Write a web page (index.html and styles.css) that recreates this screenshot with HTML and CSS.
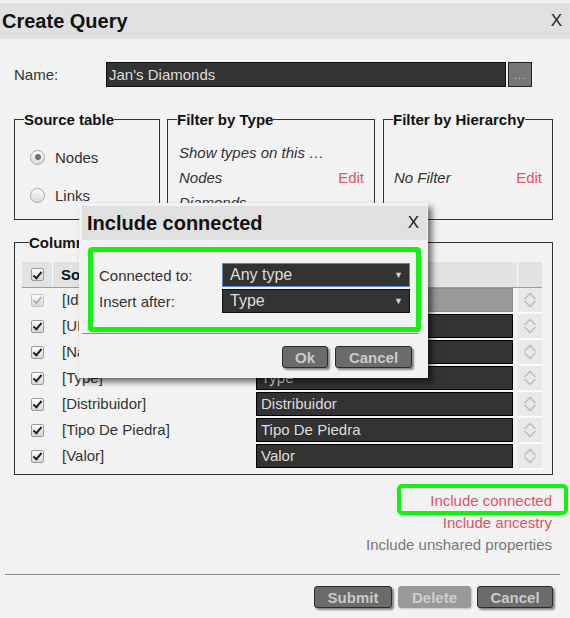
FILE: index.html
```html
<!DOCTYPE html>
<html lang="en">
<head>
<meta charset="utf-8">
<title>Create Query</title>
<link rel="stylesheet" href="styles.css">
</head>
<body>
<div class="page">
  <div class="titlebar">
    <h1 class="title">Create Query</h1>
    <span class="close">X</span>
  </div>

  <div class="name-row">
    <span class="name-label">Name:</span>
    <div class="name-input">Jan's Diamonds</div>
    <div class="name-btn">...</div>
  </div>

  <div class="filters">
    <fieldset class="box src">
      <legend>Source table</legend>
      <div class="src-body">
        <div class="radio-row"><span class="radio on"></span><span class="radio-label">Nodes</span></div>
        <div class="radio-row second"><span class="radio"></span><span class="radio-label">Links</span></div>
      </div>
    </fieldset>
    <fieldset class="box ftype">
      <legend>Filter by Type</legend>
      <div class="ftype-body">
        <div class="frow"><em>Show types on this …</em></div>
        <div class="frow"><em>Nodes</em><a class="edit">Edit</a></div>
        <div class="frow"><em>Diamonds</em></div>
      </div>
    </fieldset>
    <fieldset class="box fhier">
      <legend>Filter by Hierarchy</legend>
      <div class="fhier-body">
        <div class="frow"><em>No Filter</em><a class="edit">Edit</a></div>
      </div>
    </fieldset>
  </div>

  <fieldset class="box columns">
    <legend>Columns</legend>
    <div class="col-table">
      <div class="col-head">
        <div class="hcell hcb"><span class="cb"></span></div>
        <div class="hcell hmain"><span class="hsrc">Source</span></div>
        <div class="hcell hspin"></div>
      </div>
      <div class="col-row">
        <div class="ccb"><span class="cb dis"></span></div>
        <div class="cname">[Id]</div>
        <div class="cinput dis"></div>
        <div class="cspin"><svg width="14" height="18" viewBox="0 0 14 18"><polyline points="1.5,8 7,2.5 12.5,8"/><polyline points="1.5,10 7,15.5 12.5,10"/></svg></div>
      </div>
      <div class="col-row">
        <div class="ccb"><span class="cb"></span></div>
        <div class="cname">[UID]</div>
        <div class="cinput">UID</div>
        <div class="cspin"><svg width="14" height="18" viewBox="0 0 14 18"><polyline points="1.5,8 7,2.5 12.5,8"/><polyline points="1.5,10 7,15.5 12.5,10"/></svg></div>
      </div>
      <div class="col-row">
        <div class="ccb"><span class="cb"></span></div>
        <div class="cname">[Name]</div>
        <div class="cinput">Name</div>
        <div class="cspin"><svg width="14" height="18" viewBox="0 0 14 18"><polyline points="1.5,8 7,2.5 12.5,8"/><polyline points="1.5,10 7,15.5 12.5,10"/></svg></div>
      </div>
      <div class="col-row">
        <div class="ccb"><span class="cb"></span></div>
        <div class="cname">[Type]</div>
        <div class="cinput">Type</div>
        <div class="cspin"><svg width="14" height="18" viewBox="0 0 14 18"><polyline points="1.5,8 7,2.5 12.5,8"/><polyline points="1.5,10 7,15.5 12.5,10"/></svg></div>
      </div>
      <div class="col-row">
        <div class="ccb"><span class="cb"></span></div>
        <div class="cname">[Distribuidor]</div>
        <div class="cinput">Distribuidor</div>
        <div class="cspin"><svg width="14" height="18" viewBox="0 0 14 18"><polyline points="1.5,8 7,2.5 12.5,8"/><polyline points="1.5,10 7,15.5 12.5,10"/></svg></div>
      </div>
      <div class="col-row">
        <div class="ccb"><span class="cb"></span></div>
        <div class="cname">[Tipo De Piedra]</div>
        <div class="cinput">Tipo De Piedra</div>
        <div class="cspin"><svg width="14" height="18" viewBox="0 0 14 18"><polyline points="1.5,8 7,2.5 12.5,8"/><polyline points="1.5,10 7,15.5 12.5,10"/></svg></div>
      </div>
      <div class="col-row">
        <div class="ccb"><span class="cb"></span></div>
        <div class="cname">[Valor]</div>
        <div class="cinput">Valor</div>
        <div class="cspin"><svg width="14" height="18" viewBox="0 0 14 18"><polyline points="1.5,8 7,2.5 12.5,8"/><polyline points="1.5,10 7,15.5 12.5,10"/></svg></div>
      </div>
    </div>
  </fieldset>

  <div class="links">
    <div><a class="link red hl-link">Include connected</a></div>
    <div><a class="link red">Include ancestry</a></div>
    <div><a class="link grey">Include unshared properties</a></div>
  </div>

  <div class="sep"></div>

  <div class="actions">
    <div class="btn w-submit">Submit</div>
    <div class="btn disabled w-delete">Delete</div>
    <div class="btn w-cancel">Cancel</div>
  </div>
</div>

<div class="dialog">
  <div class="dlg-title">
    <h2 class="dlg-heading">Include connected</h2>
    <span class="close">X</span>
  </div>
  <div class="hl">
    <div class="dlg-form">
      <span class="dlg-label">Connected to:</span>
      <div class="select focus"><span>Any type</span><span class="arrow">▼</span></div>
      <span class="dlg-label">Insert after:</span>
      <div class="select"><span>Type</span><span class="arrow">▼</span></div>
    </div>
  </div>
  <div class="dlg-sep"></div>
  <div class="dlg-actions">
    <div class="btn w-ok">Ok</div>
    <div class="btn w-dcancel">Cancel</div>
  </div>
</div>
</body>
</html>
```
FILE: styles.css
```css
* { box-sizing: border-box; }
html, body { margin: 0; }
body {
  background: #f2f2f2;
  font-family: "Liberation Sans", Arial, sans-serif;
  font-size: 15px;
  color: #333;
  width: 570px;
  height: 618px;
  overflow: hidden;
  position: relative;
}
.page { padding-top: 3px; }

.titlebar {
  height: 36px;
  background: #e0e0e0;
  display: flex;
  align-items: center;
  justify-content: space-between;
  padding: 0 8px 0 2px;
}
.title { margin: 0; font-size: 20px; font-weight: bold; color: #111; }
.close { font-size: 17px; color: #222; }

.name-row {
  display: flex;
  align-items: center;
  margin: 23px 0 0 14px;
  height: 25px;
}
.name-label { width: 92px; }
.name-input {
  width: 400px;
  height: 25px;
  background: #333;
  border: 1px solid #111;
  color: #ddd;
  padding: 0 2px;
  display: flex;
  align-items: center;
}
.name-btn {
  width: 24px;
  height: 25px;
  margin-left: 2px;
  background: #777;
  border: 1px solid #222;
  color: #ccc;
  font-size: 10px;
  letter-spacing: 1px;
  display: flex;
  align-items: center;
  justify-content: center;
  padding-top: 2px;
}

.box {
  margin: 0;
  padding: 0;
  border: 1px solid #333;
  min-width: 0;
}
.box legend {
  padding: 0;
  margin-left: 9px;
  font-weight: bold;
  font-size: 15px;
  line-height: 17px;
  color: #111;
}

.filters {
  display: flex;
  margin: 24px 0 0 14px;
  height: 109px;
}
.box.src { width: 146px; }
.box.ftype { width: 208px; margin-left: 7px; }
.box.fhier { width: 170px; margin-left: 8px; }

.src-body { padding: 19px 0 0 15px; }
.radio-row { display: flex; align-items: center; height: 20px; }
.radio-row.second { margin-top: 18px; }
.radio-label { margin-left: 10px; }
.radio {
  width: 15px;
  height: 15px;
  border-radius: 50%;
  border: 1px solid #a8a8a8;
  background: linear-gradient(#fbfbfb, #dadada);
  display: inline-block;
  position: relative;
}
.radio.on::after {
  content: "";
  position: absolute;
  left: 3.5px;
  top: 3.5px;
  width: 6px;
  height: 6px;
  border-radius: 50%;
  background: #707070;
}

.ftype-body { padding: 12px 10px 0 11px; }
.fhier-body { padding: 37px 10px 0 10px; }
.frow {
  display: flex;
  justify-content: space-between;
  height: 25px;
  line-height: 25px;
  white-space: nowrap;
}
.frow em { font-style: italic; color: #333; }
.edit { color: #e05262; }

.box.columns {
  width: 539px;
  margin: 14px 0 0 14px;
  padding: 11px 10px 4px 7px;
}
.box.columns legend { margin-left: 7px; }
.col-table { width: 520px; }
.col-head {
  display: grid;
  grid-template-columns: 30px 464px 24px;
  column-gap: 1px;
  height: 26px;
  background: #f8f8f8;
  border-bottom: 1px solid #9c9c9c;
}
.hcell { background: #e2e2e2; display: flex; align-items: center; }
.hcb { justify-content: center; }
.hmain { font-weight: bold; color: #111; padding-left: 8px; }

.col-row {
  display: grid;
  grid-template-columns: 30px 204px 257px 29px;
  height: 26px;
}
.ccb { display: flex; align-items: center; justify-content: center; height: 24px; }
.cname { padding-left: 10px; height: 24px; line-height: 24px; color: #333; white-space: nowrap; }
.cinput {
  height: 24px;
  background: #333;
  border: 1px solid #000;
  color: #ddd;
  padding-left: 4px;
  line-height: 22px;
}
.cinput.dis { background: #9a9a9a; border-color: #8a8a8a; }
.cspin {
  justify-self: end;
  width: 24px;
  height: 26px;
  background: #e8e8e8;
  border-bottom: 2px solid #fbfbfb;
  display: flex;
  align-items: center;
  justify-content: center;
}
.cspin svg { fill: none; stroke: #bdbdbd; stroke-width: 1.5; }

.cb {
  width: 13px;
  height: 13px;
  border: 1px solid #9a9a9a;
  border-radius: 2px;
  background: linear-gradient(#fdfdfd, #d6d6d6);
  display: inline-block;
  position: relative;
}
.cb::after {
  content: "";
  position: absolute;
  left: 3.5px;
  top: 0.5px;
  width: 3px;
  height: 7px;
  border: solid #222;
  border-width: 0 2px 2px 0;
  transform: rotate(40deg);
}
.cb.dis { border-color: #c6c6c6; }
.cb.dis::after { border-color: #b4b4b4; }

.links {
  margin-top: 15px;
  padding-right: 18px;
  text-align: right;
  line-height: 22px;
}
.link { cursor: pointer; }
.red { color: #e05262; }
.grey { color: #777; }
.hl-link { position: relative; }
.hl-link::after {
  content: "";
  position: absolute;
  left: -33px;
  right: -16px;
  top: -8px;
  bottom: -6px;
  border: 4px solid #14f014;
  border-radius: 5px;
}

.sep {
  margin: 18px 10px 0 5px;
  border-top: 1px solid #888;
}

.actions {
  display: flex;
  justify-content: flex-end;
  gap: 6px;
  margin-top: 11px;
  padding-right: 17px;
}
.btn {
  height: 22px;
  border: 1px solid #2b2b2b;
  border-radius: 3px;
  background: #6b6b6b;
  color: #c9c9c9;
  font-weight: bold;
  font-size: 15px;
  box-shadow: 2px 2px 2px rgba(0, 0, 0, 0.45);
  display: flex;
  align-items: center;
  justify-content: center;
}
.btn.disabled {
  background: #999;
  border-color: #999;
  color: #cdcdcd;
  box-shadow: 1px 1px 2px rgba(0, 0, 0, 0.2);
}
.w-submit { width: 78px; }
.w-delete { width: 73px; }
.w-cancel { width: 76px; }
.w-ok { width: 46px; }
.w-dcancel { width: 77px; }

.dialog {
  position: absolute;
  left: 79px;
  top: 203px;
  width: 349px;
  height: 175px;
  background: #f2f2f2;
  padding: 3px 1px 0 3px;
  box-shadow: 4px 4px 6px rgba(0, 0, 0, 0.55);
}
.dlg-title {
  height: 34px;
  background: #e0e0e0;
  display: flex;
  align-items: center;
  justify-content: space-between;
  padding: 0 8px 0 5px;
}
.dlg-heading { margin: 0; font-size: 20px; font-weight: bold; color: #111; }
.hl {
  margin: 7px 6px 0 6px;
  height: 85px;
  border: 5px solid #14f014;
  border-radius: 4px;
  padding: 11px 6px 0 6px;
}
.dlg-form {
  display: grid;
  grid-template-columns: 123px 188px;
  row-gap: 2px;
  align-items: center;
}
.dlg-label { color: #333; }
.select {
  height: 24px;
  background: #333;
  border: 1px solid #111;
  color: #ddd;
  font-size: 16px;
  padding: 0 6px 0 7px;
  display: flex;
  align-items: center;
  justify-content: space-between;
}
.select.focus { border-color: #5a88d0; }
.arrow { font-size: 9px; color: #cfcfcf; }
.dlg-sep {
  margin: 1px 9px 0 0;
  border-top: 1px solid #8a8a8a;
}
.dlg-actions {
  display: flex;
  justify-content: flex-end;
  gap: 7px;
  margin-top: 12px;
  padding-right: 15px;
}
```
